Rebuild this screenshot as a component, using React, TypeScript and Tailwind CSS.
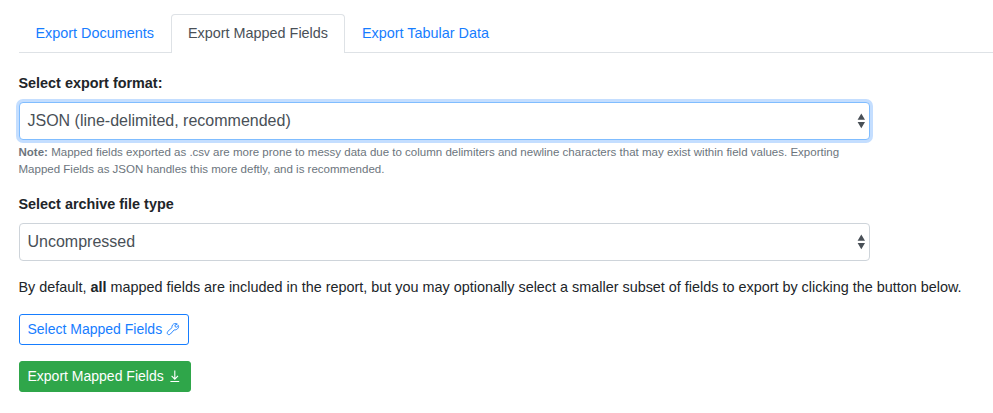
function SortArrows() {
  return (
    <svg width="8" height="16" viewBox="0 0 8 16" className="shrink-0 fill-[#495057]">
      <path d="M4.300 .5 8 6.800H.6zM4.300 15.200.6 9h7.400z" />
    </svg>
  );
}

function WrenchIcon() {
  return (
    <svg width="14" height="14" viewBox="0 0 14 14" fill="none" stroke="currentColor" strokeWidth="0.9" strokeLinejoin="round" strokeLinecap="round" className="-mt-0.5">
      <path d="M11 1.900C9.500 1.100 7.700 1.500 6.700 2.800 6 3.700 5.800 4.700 6 5.600L1.900 9.300C1.100 10.100 1 11.400 1.700 12.100 2.400 12.900 3.600 12.800 4.400 12L8.200 7.900C9.300 8.100 10.600 7.700 11.500 6.800 12.500 5.900 12.900 4.600 12.400 3.400L10.500 5.100 9.200 4.800 9 3.500Z" />
    </svg>
  );
}

function DownloadIcon() {
  return (
    <svg width="14" height="14" viewBox="0 0 14 14" fill="none" stroke="currentColor" strokeWidth="1.1" className="-mt-0.5">
      <path d="M6.800 1.500V10M3.600 6.900 6.800 10.100 10 6.900M2.400 12.500H11.200" />
    </svg>
  );
}

function Select({ value, focused = false }: { value: string; focused?: boolean }) {
  return (
    <button
      type="button"
      className={
        "flex h-[38px] w-[851px] items-center justify-between rounded border bg-white pl-[7.5px] pr-1 text-[16px] text-[#495057] " +
        (focused ? "border-[#80bdff] shadow-[0_0_0_3px_#c4deff]" : "border-[#ced4da]")
      }
    >
      <span className="pb-0.5">{value}</span>
      <SortArrows />
    </button>
  );
}

export default function App() {
  return (
    <main className="h-[413px] overflow-hidden bg-white pl-[19px] pt-[14px] font-['Liberation_Sans',Arial,sans-serif] text-[14.4px] leading-[21px] text-[#212529]">
      <nav className="flex h-[39px] border-b border-[#dee2e6] text-[#167dff]">
        <a className="h-[39px] w-[152px] pl-[16.500px] pt-[9px]">Export Documents</a>
        <a className="h-[39px] w-[174px] rounded-t border border-b-0 border-[#dee2e6] bg-white pl-4 pt-2 text-[#495057]">Export Mapped Fields</a>
        <a className="h-[39px] pl-[17px] pt-[9px]">Export Tabular Data</a>
      </nav>
      <section>
        <h2 className="-ml-[0.5px] mt-5 mb-2 font-bold">Select export format:</h2>
        <Select value="JSON (line-delimited, recommended)" focused />
        <p className="-ml-[0.5px] mt-1 text-[11.52px] leading-[17px] text-[#6c757d]">
          <b>Note:</b> Mapped fields exported as .csv are more prone to messy data due to column delimiters and newline characters that may exist within field values. Exporting
          <br />
          Mapped Fields as JSON handles this more deftly, and is recommended.
        </p>
      </section>
      <section>
        <h2 className="-ml-[0.5px] mt-4 mb-2 font-bold">Select archive file type</h2>
        <Select value="Uncompressed" />
      </section>
      <p className="-ml-[0.5px] mt-4 whitespace-nowrap">
        By default, <b>all</b> mapped fields are included in the report, but you may optionally select a smaller subset of fields to export by clicking the button below.
      </p>
      <div className="mt-4 flex flex-col items-start gap-4 text-[14px]">
        <button type="button" className="flex h-[31px] w-[170px] items-center justify-between rounded-[3px] border border-[#167dff] pl-[7.5px] pr-2 text-[#167dff]">
          <span>Select Mapped Fields</span>
          <WrenchIcon />
        </button>
        <button type="button" className="flex h-[31px] w-[172px] items-center justify-between rounded-[3px] border border-[#2fa64a] bg-[#2fa64a] pl-[7.5px] pr-2 text-white">
          <span>Export Mapped Fields</span>
          <DownloadIcon />
        </button>
      </div>
    </main>
  );
}
